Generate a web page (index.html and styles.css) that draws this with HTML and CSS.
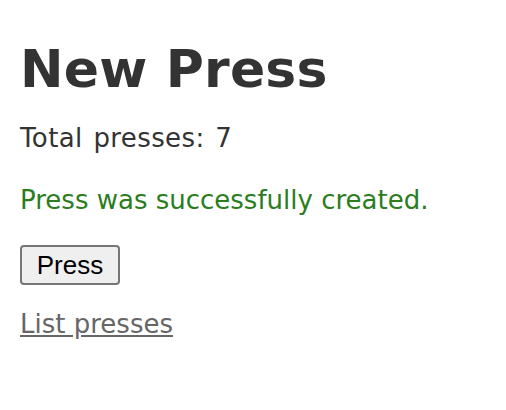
FILE: index.html
```html
<!DOCTYPE html>
<html lang="en">
<head>
<meta charset="utf-8">
<title>New Press</title>
<link rel="stylesheet" href="styles.css">
</head>
<body>
<main class="page">
  <h1 class="title">New Press</h1>
  <p class="count">Total presses: 7</p>
  <p class="notice">Press was successfully created.</p>
  <form class="press-form" action="#" onsubmit="return false;">
    <button type="submit" class="press-btn">Press</button>
  </form>
  <a class="list-link" href="#">List presses</a>
</main>
</body>
</html>
```
FILE: styles.css
```css
html, body {
  margin: 0;
  padding: 0;
  background: #fff;
}

.page {
  display: flex;
  flex-direction: column;
  align-items: flex-start;
  padding: 39px 20px 0 20px;
  font-family: "DejaVu Sans", Verdana, sans-serif;
  font-size: 26px;
  line-height: 30px;
  color: #333;
}

.title {
  margin: 0;
  font-size: 52px;
  line-height: 60px;
  font-weight: bold;
  color: #333;
  letter-spacing: 0.2px;
}

.count {
  margin: 24px 0 0 0;
  word-spacing: 2px;
  letter-spacing: 0.4px;
}

.notice {
  margin: 32px 0 0 0;
  color: #2b7d1e;
}

.press-form {
  margin: 30px 0 0 0;
}

.press-btn {
  display: block;
  box-sizing: border-box;
  width: 100px;
  height: 40px;
  padding: 0;
  font-family: "Liberation Sans", Arial, sans-serif;
  font-size: 26px;
  line-height: 36px;
  color: #000;
  background: #efefef;
  border: 2px solid #767676;
  border-radius: 4px;
}

.list-link {
  margin-top: 24px;
  color: #666;
  text-decoration: underline;
}
```
